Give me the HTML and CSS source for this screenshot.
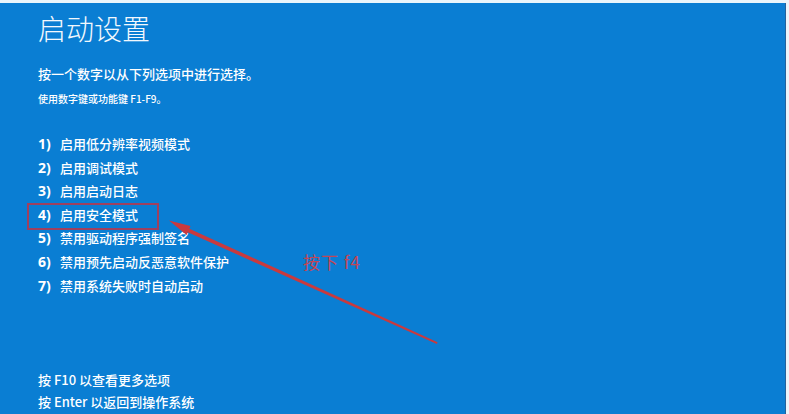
FILE: index.html
```html
<!DOCTYPE html>
<html lang="zh-CN">
<head>
<meta charset="utf-8">
<title>启动设置</title>
<link rel="stylesheet" href="styles.css">
</head>
<body>
<div class="screen">
  <h1 class="title">启动设置</h1>
  <p class="lead">按一个数字以从下列选项中进行选择。</p>
  <p class="hint">使用数字键或功能键 F1-F9。</p>
  <ol class="options">
    <li><span class="num">1)</span>启用低分辨率视频模式</li>
    <li><span class="num">2)</span>启用调试模式</li>
    <li><span class="num">3)</span>启用启动日志</li>
    <li class="marked"><span class="num">4)</span>启用安全模式</li>
    <li><span class="num">5)</span>禁用驱动程序强制签名</li>
    <li><span class="num">6)</span>禁用预先启动反恶意软件保护</li>
    <li><span class="num">7)</span>禁用系统失败时自动启动</li>
  </ol>
  <div class="footer">
    <p>按 F10 以查看更多选项</p>
    <p>按 Enter 以返回到操作系统</p>
  </div>
  <span class="note">按下 f4</span>
  <svg class="arrow" width="789" height="414" viewBox="0 0 789 414">
    <polygon points="169,220.5 190.5,226 189.4,228.7 437.6,342.2 436.8,344 187.8,232.3 186.6,235" fill="#c93a3e"/>
  </svg>
</div>
</body>
</html>
```

FILE: styles.css
```css
* { box-sizing: border-box; }
html, body { margin: 0; padding: 0; }
body {
  background: #eaf5fb;
  width: 789px;
  height: 414px;
  overflow: hidden;
  font-family: "Noto Sans CJK SC", "Noto Sans", sans-serif;
}
.screen {
  position: relative;
  margin-top: 3px;
  width: 786px;
  height: 411px;
  background: #0a7ed3;
  border-right: 1px solid #23629a;
  padding: 7px 0 1px 38px;
  display: flex;
  flex-direction: column;
  color: #ffffff;
}
.title {
  margin: 0;
  font-size: 28px;
  line-height: 36px;
  font-weight: 300;
  color: #f2f8fd;
}
.lead {
  margin: 18px 0 0;
  font-size: 13px;
  line-height: 20px;
  font-weight: 500;
}
.hint {
  margin: 8px 0 0;
  font-size: 10px;
  line-height: 14px;
  font-weight: 500;
}
.options {
  list-style: none;
  margin: 26px 0 0;
  padding: 0;
}
.options li {
  font-size: 13px;
  line-height: 23.6px;
  font-weight: 500;
  position: relative;
  display: flex;
  align-items: baseline;
}
.options .num {
  width: 22px;
  font-size: 14px;
  font-weight: 700;
  font-family: "Noto Sans", sans-serif;
}
.options li.marked::before {
  content: "";
  position: absolute;
  left: -11px;
  top: 0;
  width: 128px;
  height: 23px;
  border: 2px solid #a0405e;
}
.footer {
  margin-top: auto;
}
.footer p {
  margin: 0;
  font-size: 13px;
  line-height: 22px;
  font-weight: 500;
}
.note {
  position: absolute;
  left: 303px;
  top: 247px;
  font-size: 17px;
  line-height: 24px;
  color: #c24656;
  font-weight: 400;
  letter-spacing: 1px;
}
.arrow {
  position: absolute;
  left: 0;
  top: -3px;
  pointer-events: none;
}
```
